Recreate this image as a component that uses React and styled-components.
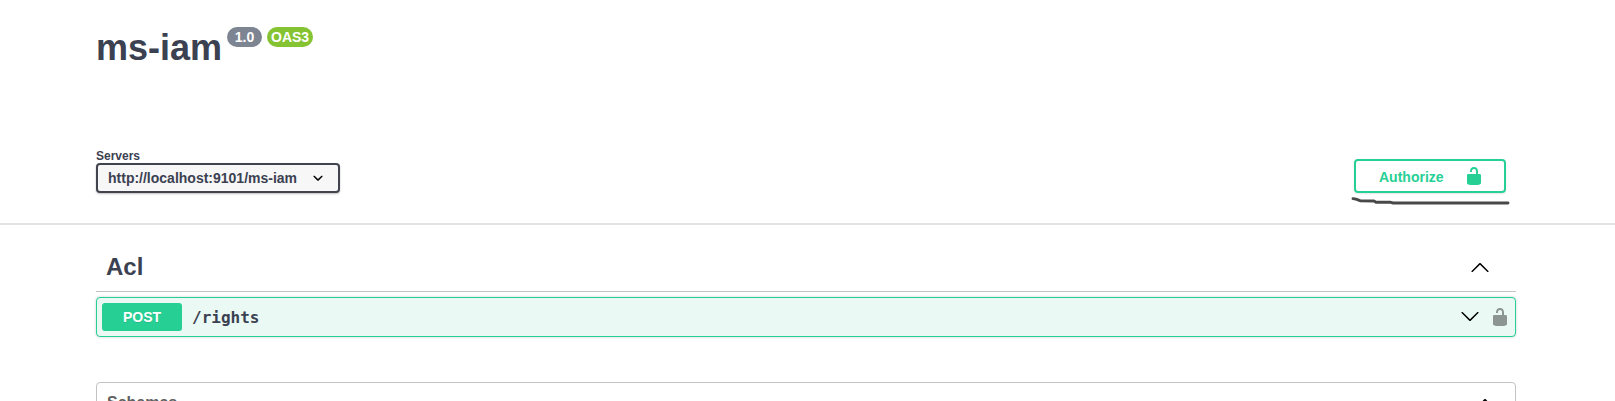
import React from 'react';
import styled, { createGlobalStyle } from 'styled-components';

const GlobalStyle = createGlobalStyle`
  *, *::before, *::after { box-sizing: border-box; }
  body {
    margin: 0;
    background: #fff;
    color: #3b4151;
    font-family: "Liberation Sans", Arial, sans-serif;
    height: 401px;
    overflow: hidden;
  }
`;

const Wrapper = styled.div`
  width: 1460px;
  margin: 0 auto;
  padding: 0 20px;
  position: relative;
  left: -1.5px;
`;

const Info = styled.header`
  display: flex;
  align-items: flex-start;
  height: 150px;
  padding-top: 27px;
`;

const Title = styled.h1`
  margin: 0 5px 0 0;
  font-size: 36px;
  line-height: 41px;
  font-weight: 700;
`;

const Badge = styled.span`
  height: 20px;
  width: ${(p) => p.$width}px;
  margin-right: 5px;
  border-radius: 10px;
  background: ${(p) => p.$color};
  color: #fff;
  font-size: 14px;
  font-weight: 700;
  line-height: 20px;
  text-align: center;
`;

const SchemeBar = styled.section`
  height: 75px;
  border-bottom: 2px solid #e3e3e4;
`;

const SchemeRow = styled(Wrapper)`
  display: flex;
  justify-content: space-between;
  align-items: flex-start;
`;

const ServerLabel = styled.label`
  display: flex;
  flex-direction: column;
  font-size: 12px;
  line-height: 13px;
  font-weight: 700;
`;

const Select = styled.span`
  display: flex;
  align-items: center;
  justify-content: space-between;
  width: 244px;
  height: 30px;
  padding: 0 10px;
  border: 2px solid #41444e;
  border-radius: 4px;
  background: #f7f7f7;
  box-shadow: 0 1px 2px rgba(0, 0, 0, 0.25);
  font-size: 14px;
`;

const AuthArea = styled.div`
  position: relative;
  margin: 9px 10px 0 0;
`;

const AuthorizeButton = styled.button`
  display: flex;
  align-items: center;
  justify-content: space-between;
  width: 152px;
  height: 34px;
  padding: 0 20px 0 23px;
  border: 2px solid #26cf94;
  border-radius: 4px;
  background: transparent;
  box-shadow: 0 1px 2px rgba(0, 0, 0, 0.1);
  color: #26cf94;
  font: 700 14px "Liberation Sans", Arial, sans-serif;
`;

const ButtonLabel = styled.span`
  padding-top: 2px;
`;

const Scribble = styled.svg`
  position: absolute;
  left: -4px;
  top: 36px;
`;

const TagHeader = styled.h2`
  display: flex;
  align-items: center;
  justify-content: space-between;
  height: 52px;
  margin: 15px 0 5px;
  padding: 3px 26px 0 10px;
  border-bottom: 1px solid #c2c3c5;
  font-size: 24px;
`;

const Operation = styled.div`
  display: flex;
  align-items: center;
  height: 40px;
  padding: 0 5px;
  border: 1px solid #26cf94;
  border-radius: 4px;
  background: #eaf9f4;
  box-shadow: 0 0 3px rgba(0, 0, 0, 0.19);
`;

const Method = styled.span`
  width: 80px;
  height: 28px;
  border-radius: 3px;
  background: #26cf94;
  color: #fff;
  font-size: 14px;
  font-weight: 700;
  line-height: 28px;
  text-align: center;
  text-shadow: 0 1px 0 rgba(0, 0, 0, 0.1);
`;

const Path = styled.span`
  flex: 1;
  padding: 0 10px;
  font: 700 16px "DejaVu Sans Mono", monospace;
`;

const OperationIcons = styled.span`
  display: flex;
  gap: 10px;
`;

const Schemas = styled.section`
  margin-top: 45px;
  height: 60px;
  border: 1px solid #c2c3c5;
  border-radius: 4px;
`;

const SchemasTitle = styled.h4`
  display: flex;
  align-items: center;
  justify-content: space-between;
  height: 40px;
  margin: 0;
  padding: 0 20px 0 10px;
  color: #606060;
  font-size: 16px;
`;

const Icon = styled.svg`
  display: block;
  flex: none;
  fill: ${(p) => p.$color || '#000'};
  transform: ${(p) => (p.$flip ? 'rotate(180deg)' : 'none')};
`;

const Lock = ({ color }) => (
  <Icon width="20" height="20" viewBox="0 0 20 20" $color={color}>
    <path d="M15.8 8H14V5.6C14 2.703 12.665 1 10 1 7.334 1 6 2.703 6 5.6V6h2v-.801C8 3.754 8.797 3 10 3c1.203 0 2 .754 2 2.199V8H4c-.553 0-1 .646-1 1.199V17c0 .549.428 1.139.951 1.307l1.197.387C5.672 18.861 6.55 19 7.1 19h5.8c.549 0 1.428-.139 1.951-.307l1.196-.387c.524-.167.953-.757.953-1.306V9.199C17 8.646 16.352 8 15.8 8z" />
  </Icon>
);

const Arrow = ({ size = 20, down }) => (
  <Icon width={size} height={size} viewBox="0 0 20 20" $flip={down}>
    <path d="M17.418 14.908c.272.268.709.268.979 0s.271-.701 0-.969l-7.908-7.83c-.27-.268-.707-.268-.979 0l-7.908 7.83c-.27.268-.27.701 0 .969.271.268.709.268.979 0L10 7.767l7.418 7.141z" />
  </Icon>
);

const SelectArrow = () => (
  <Icon width="20" height="20" viewBox="0 0 20 20">
    <path d="M13.418 7.859c.271-.268.709-.268.978 0 .27.268.272.701 0 .969l-3.908 3.83c-.27.268-.707.268-.979 0l-3.908-3.83c-.27-.267-.27-.701 0-.969.271-.268.709-.268.978 0L10 11l3.418-3.141z" />
  </Icon>
);

export default function App() {
  return (
    <>
      <GlobalStyle />
      <Wrapper>
        <Info>
          <Title>ms-iam</Title>
          <Badge $width={35} $color="#7d8492">1.0</Badge>
          <Badge $width={46} $color="#85c333">OAS3</Badge>
        </Info>
      </Wrapper>
      <SchemeBar>
        <SchemeRow>
          <ServerLabel>
            Servers
            <Select>
              http://localhost:9101/ms-iam
              <SelectArrow />
            </Select>
          </ServerLabel>
          <AuthArea>
            <AuthorizeButton>
              <ButtonLabel>Authorize</ButtonLabel>
              <Lock color="#26cf94" />
            </AuthorizeButton>
            <Scribble width="162" height="12" viewBox="0 0 162 12" fill="none" stroke="#484848" strokeWidth="2.9" strokeLinecap="round" strokeLinejoin="round">
              <path d="M3 3.6L6 4.2L10 5.7L24 6L26 7.2L40 7.2L43 8L158 8" />
            </Scribble>
          </AuthArea>
        </SchemeRow>
      </SchemeBar>
      <Wrapper>
        <TagHeader>
          Acl
          <Arrow />
        </TagHeader>
        <Operation>
          <Method>POST</Method>
          <Path>/rights</Path>
          <OperationIcons>
            <Arrow down />
            <Lock color="#8c9592" />
          </OperationIcons>
        </Operation>
        <Schemas>
          <SchemasTitle>
            Schemas
            <Arrow />
          </SchemasTitle>
        </Schemas>
      </Wrapper>
    </>
  );
}
